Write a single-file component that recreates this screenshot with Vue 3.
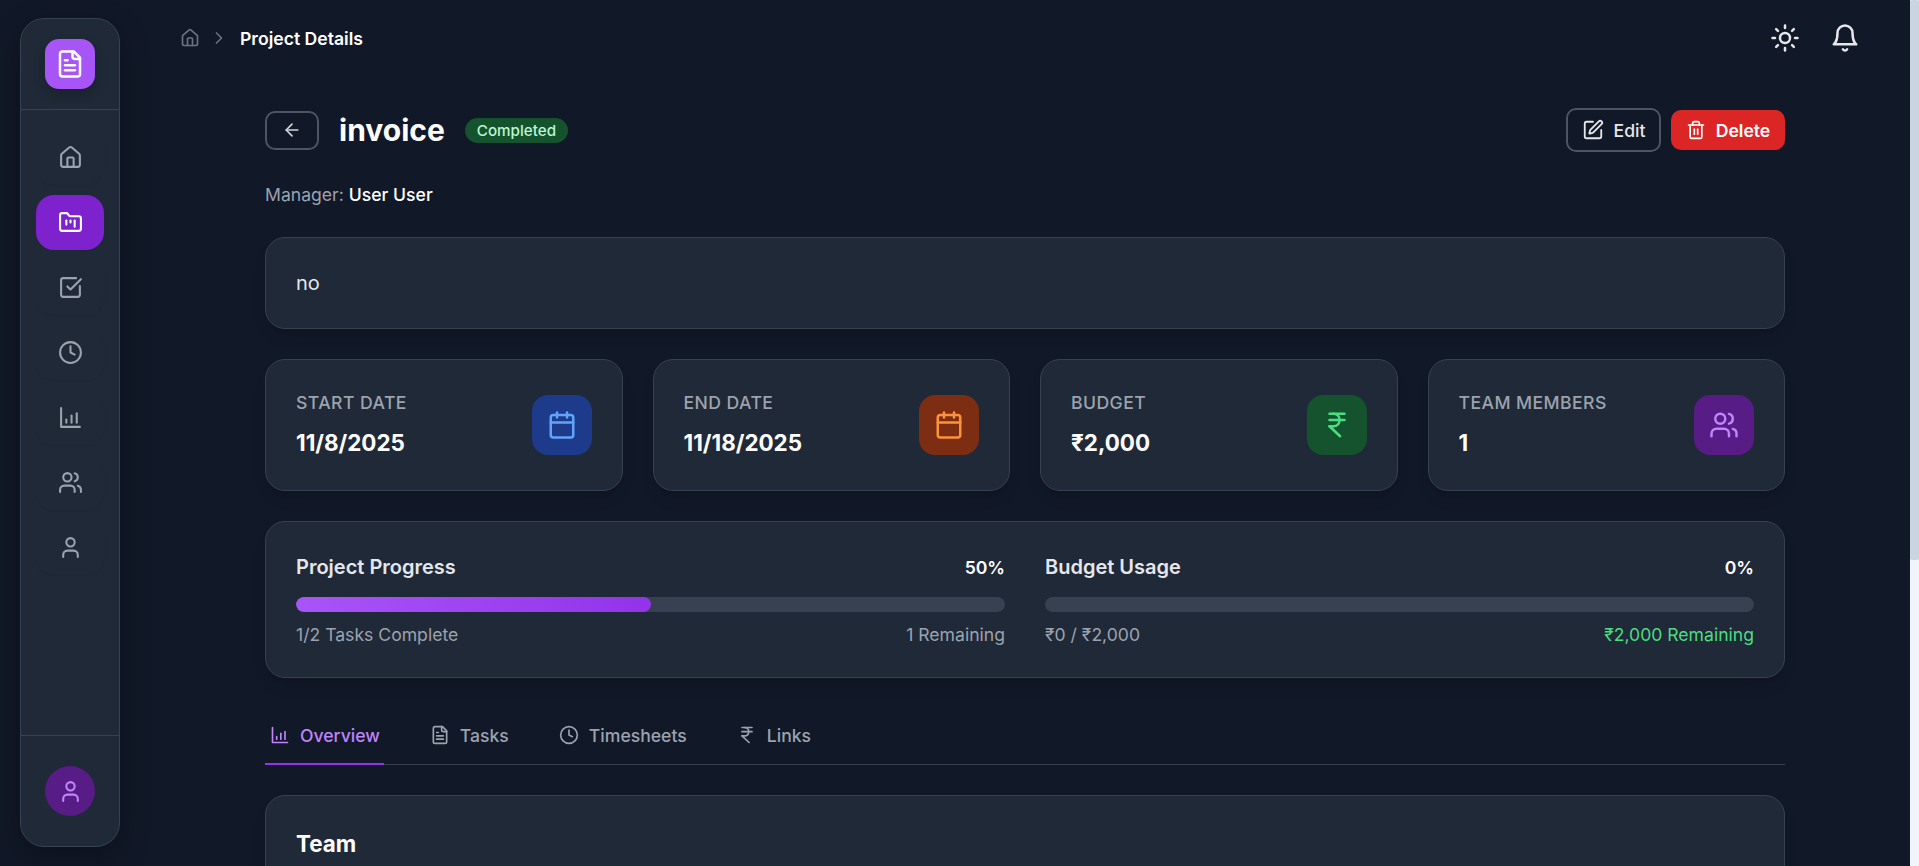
<script setup>
import { h } from 'vue'

const paths = {
  home: '<path d="M15 21v-8a1 1 0 0 0-1-1h-4a1 1 0 0 0-1 1v8"/><path d="M3 10a2 2 0 0 1 .709-1.528l7-5.999a2 2 0 0 1 2.582 0l7 5.999A2 2 0 0 1 21 10v9a2 2 0 0 1-2 2H5a2 2 0 0 1-2-2z"/>',
  folder: '<path d="M4 20h16a2 2 0 0 0 2-2V8a2 2 0 0 0-2-2h-7.93a2 2 0 0 1-1.66-.9l-.82-1.2A2 2 0 0 0 7.93 3H4a2 2 0 0 0-2 2v13c0 1.1.9 2 2 2Z"/><path d="M8 10v4"/><path d="M12 10v2"/><path d="M16 10v6"/>',
  check: '<path d="M21 10.656V19a2 2 0 0 1-2 2H5a2 2 0 0 1-2-2V5a2 2 0 0 1 2-2h12.344"/><path d="m9 11 3 3L22 4"/>',
  clock: '<circle cx="12" cy="12" r="10"/><path d="M12 6v6l4 2"/>',
  chart: '<path d="M3 3v18h18"/><path d="M8 17v-3"/><path d="M13 17v-7"/><path d="M18 17V8"/>',
  users: '<path d="M16 21v-2a4 4 0 0 0-4-4H6a4 4 0 0 0-4 4v2"/><circle cx="9" cy="7" r="4"/><path d="M22 21v-2a4 4 0 0 0-3-3.87"/><path d="M16 3.13a4 4 0 0 1 0 7.75"/>',
  user: '<path d="M19 21v-2a4 4 0 0 0-4-4H9a4 4 0 0 0-4 4v2"/><circle cx="12" cy="7" r="4"/>',
  file: '<path d="M15 2H6a2 2 0 0 0-2 2v16a2 2 0 0 0 2 2h12a2 2 0 0 0 2-2V7Z"/><path d="M14 2v4a2 2 0 0 0 2 2h4"/><path d="M10 9H8"/><path d="M16 13H8"/><path d="M16 17H8"/>',
  sun: '<circle cx="12" cy="12" r="4"/><path d="M12 2v2"/><path d="M12 20v2"/><path d="m4.93 4.93 1.41 1.41"/><path d="m17.66 17.66 1.41 1.41"/><path d="M2 12h2"/><path d="M20 12h2"/><path d="m6.34 17.66-1.41 1.41"/><path d="m19.07 4.93-1.41 1.41"/>',
  bell: '<path d="M6 8a6 6 0 0 1 12 0c0 7 3 9 3 9H3s3-2 3-9"/><path d="M10.3 21a1.94 1.94 0 0 0 3.4 0"/>',
  back: '<path d="m12 19-7-7 7-7"/><path d="M19 12H5"/>',
  chevron: '<path d="m9 18 6-6-6-6"/>',
  edit: '<path d="M12 3H5a2 2 0 0 0-2 2v14a2 2 0 0 0 2 2h14a2 2 0 0 0 2-2v-7"/><path d="M18.375 2.625a1 1 0 0 1 3 3l-9.013 9.014a2 2 0 0 1-.853.505l-2.873.84a.5.5 0 0 1-.62-.62l.84-2.873a2 2 0 0 1 .506-.852z"/>',
  trash: '<path d="M3 6h18"/><path d="M19 6v14c0 1-1 2-2 2H7c-1 0-2-1-2-2V6"/><path d="M8 6V4c0-1 1-2 2-2h4c1 0 2 1 2 2v2"/><path d="M10 11v6"/><path d="M14 11v6"/>',
  calendar: '<path d="M8 2v4"/><path d="M16 2v4"/><rect x="3" y="4" width="18" height="18" rx="2"/><path d="M3 10h18"/>',
  rupee: '<path d="M6 3h12"/><path d="M6 8h12"/><path d="m6 13 8.5 8"/><path d="M6 13h3"/><path d="M9 13c6.667 0 6.667-10 0-10"/>'
}

const Icon = (props) =>
  h('svg', {
    width: props.size,
    height: props.size,
    viewBox: '0 0 24 24',
    fill: 'none',
    stroke: 'currentColor',
    'stroke-width': 2,
    'stroke-linecap': 'round',
    'stroke-linejoin': 'round',
    innerHTML: paths[props.name]
  })
Icon.props = ['name', 'size']

const navItems = [
  { icon: 'home' },
  { icon: 'folder', active: true },
  { icon: 'check' },
  { icon: 'clock' },
  { icon: 'chart' },
  { icon: 'users' },
  { icon: 'user' }
]

const stats = [
  { label: 'Start Date', value: '11/8/2025', icon: 'calendar', tone: 'blue' },
  { label: 'End Date', value: '11/18/2025', icon: 'calendar', tone: 'orange' },
  { label: 'Budget', value: '₹2,000', icon: 'rupee', tone: 'green' },
  { label: 'Team Members', value: '1', icon: 'users', tone: 'purple' }
]

const progress = [
  { title: 'Project Progress', pct: 50, left: '1/2 Tasks Complete', right: '1 Remaining' },
  { title: 'Budget Usage', pct: 0, left: '₹0 / ₹2,000', right: '₹2,000 Remaining', good: true }
]

const tabs = [
  { label: 'Overview', icon: 'chart', active: true },
  { label: 'Tasks', icon: 'file' },
  { label: 'Timesheets', icon: 'clock' },
  { label: 'Links', icon: 'rupee' }
]
</script>

<template>
  <div class="page">
    <aside class="sidebar">
      <div class="brand">
        <div class="logo"><Icon name="file" :size="30" /></div>
      </div>
      <nav class="nav">
        <a v-for="(item, i) in navItems" :key="i" class="nav-item" :class="{ active: item.active }">
          <Icon :name="item.icon" :size="25" />
        </a>
      </nav>
      <div class="side-foot">
        <div class="avatar"><Icon name="user" :size="25" /></div>
      </div>
    </aside>

    <main class="main">
      <header class="topbar">
        <div class="crumbs">
          <span class="crumb-home"><Icon name="home" :size="20" /></span>
          <span class="crumb-sep"><Icon name="chevron" :size="20" /></span>
          <span class="crumb-current">Project Details</span>
        </div>
        <div class="top-actions">
          <span class="top-icon"><Icon name="sun" :size="30" /></span>
          <span class="top-icon"><Icon name="bell" :size="30" /></span>
        </div>
      </header>

      <div class="content">
        <div class="title-row">
          <div class="title-left">
            <button class="back"><Icon name="back" :size="20" /></button>
            <h1 class="title">invoice</h1>
            <span class="badge">Completed</span>
          </div>
          <div class="title-actions">
            <button class="btn btn-edit"><Icon name="edit" :size="22" />Edit</button>
            <button class="btn btn-delete"><Icon name="trash" :size="20" />Delete</button>
          </div>
        </div>

        <p class="manager"><span class="muted">Manager:</span> <span class="manager-name">User User</span></p>

        <section class="card desc">no</section>

        <section class="stats">
          <div v-for="s in stats" :key="s.label" class="card stat">
            <div>
              <div class="stat-label">{{ s.label }}</div>
              <div class="stat-value">{{ s.value }}</div>
            </div>
            <div class="tile" :class="s.tone"><Icon :name="s.icon" :size="30" /></div>
          </div>
        </section>

        <section class="card progress">
          <div v-for="p in progress" :key="p.title" class="prog">
            <div class="prog-head">
              <span class="prog-title">{{ p.title }}</span>
              <span class="prog-pct">{{ p.pct }}%</span>
            </div>
            <div class="bar"><div class="bar-fill" :style="{ width: p.pct + '%' }"></div></div>
            <div class="prog-foot">
              <span>{{ p.left }}</span>
              <span :class="{ good: p.good }">{{ p.right }}</span>
            </div>
          </div>
        </section>

        <div class="tabs">
          <a v-for="t in tabs" :key="t.label" class="tab" :class="{ active: t.active }">
            <Icon :name="t.icon" :size="20" />{{ t.label }}
          </a>
        </div>

        <section class="card team">
          <h2 class="team-title">Team</h2>
        </section>
      </div>
    </main>

    <div class="scrollbar" aria-hidden="true"><div class="scroll-thumb"></div></div>
  </div>
</template>

<style scoped>
.page {
  min-height: 100vh;
  box-sizing: border-box;
  padding-right: 9px;
  background: #111827;
  font-family: Inter, "Liberation Sans", sans-serif;
  color: #fff;
}
.scrollbar {
  position: fixed;
  top: 0;
  right: 0;
  bottom: 0;
  width: 9px;
  background: #f1f5f9;
}
.scroll-thumb {
  height: 560px;
  background: #cbd5e1;
  border-radius: 2px;
}
.sidebar {
  position: fixed;
  left: 20px;
  top: 18px;
  bottom: 19px;
  width: 100px;
  box-sizing: border-box;
  display: flex;
  flex-direction: column;
  background: #1f2937;
  border: 1px solid #374151;
  border-radius: 24px;
  box-shadow: 0 10px 30px rgba(0, 0, 0, 0.3);
}
.brand {
  height: 91px;
  flex: none;
  box-sizing: border-box;
  display: flex;
  justify-content: center;
  padding-top: 20px;
  border-bottom: 1px solid #374151;
}
.logo {
  width: 50px;
  height: 50px;
  border-radius: 14px;
  background: #a855f7;
  display: flex;
  align-items: center;
  justify-content: center;
  color: #fff;
  box-shadow: 0 6px 12px rgba(0, 0, 0, 0.2);
}
.nav {
  flex: 1;
  display: flex;
  flex-direction: column;
  align-items: center;
  gap: 10px;
  padding-top: 20px;
}
.nav-item {
  width: 68px;
  height: 55px;
  border-radius: 18px;
  display: flex;
  align-items: center;
  justify-content: center;
  color: #9ca3af;
  box-shadow: 0 1px 2px rgba(0, 0, 0, 0.05);
}
.nav-item.active {
  background: #7e22ce;
  color: #fff;
}
.side-foot {
  height: 111px;
  flex: none;
  box-sizing: border-box;
  border-top: 1px solid #374151;
  display: flex;
  justify-content: center;
  padding-top: 30px;
}
.avatar {
  width: 50px;
  height: 50px;
  border-radius: 50%;
  background: #581c87;
  color: #c084fc;
  display: flex;
  align-items: center;
  justify-content: center;
}
.main {
  margin-left: 140px;
}
.topbar {
  height: 76px;
  box-sizing: border-box;
  padding: 0 50px 0 40px;
  display: flex;
  align-items: center;
  justify-content: space-between;
}
.crumbs {
  display: flex;
  align-items: center;
}
.crumb-home {
  display: flex;
  color: #6b7280;
}
.crumb-sep {
  display: flex;
  color: #6b7280;
  margin: 0 11px 0 9px;
}
.crumb-current {
  font-size: 17.6px;
  font-weight: 600;
  color: #fff;
}
.top-actions {
  display: flex;
  gap: 30px;
}
.top-icon {
  display: flex;
  color: #e5e7eb;
}
.content {
  max-width: 1520px;
  margin: 0 auto;
  padding: 32px 0 44px;
}
.title-row {
  display: flex;
  align-items: center;
  justify-content: space-between;
  height: 44px;
}
.title-left {
  display: flex;
  align-items: center;
}
.back {
  width: 54px;
  height: 39px;
  box-sizing: border-box;
  background: transparent;
  border: 2px solid #4b5563;
  border-radius: 10px;
  color: #d1d5db;
  display: flex;
  align-items: center;
  justify-content: center;
  padding: 0;
}
.title {
  margin: 0 0 0 20px;
  font-size: 30px;
  line-height: 36px;
  font-weight: 700;
  color: #fff;
}
.badge {
  margin-left: 20px;
  height: 25px;
  padding: 0 12px;
  border-radius: 13px;
  background: #14532d;
  color: #bbf7d0;
  font-size: 15.2px;
  font-weight: 500;
  line-height: 25px;
}
.title-actions {
  display: flex;
  align-items: center;
  gap: 10px;
}
.btn {
  box-sizing: border-box;
  display: flex;
  align-items: center;
  gap: 10px;
  font-family: inherit;
  font-size: 17.6px;
  font-weight: 500;
  border-radius: 10px;
  padding: 0;
}
.btn-edit {
  width: 95px;
  height: 44px;
  justify-content: center;
  background: transparent;
  border: 2px solid #4b5563;
  color: #e5e7eb;
}
.btn-delete {
  width: 114px;
  height: 40px;
  justify-content: center;
  background: #dc2626;
  border: none;
  color: #fff;
  font-weight: 600;
}
.manager {
  margin: 31px 0 0;
  font-size: 17.6px;
  line-height: 24px;
}
.muted {
  color: #9ca3af;
}
.manager-name {
  color: #fff;
  font-weight: 500;
}
.card {
  box-sizing: border-box;
  background: #1f2937;
  border: 1px solid #374151;
  border-radius: 20px;
  box-shadow: 0 10px 15px -3px rgba(0, 0, 0, 0.1), 0 4px 6px -4px rgba(0, 0, 0, 0.1);
}
.desc {
  margin-top: 30px;
  height: 92px;
  padding: 0 30px;
  display: flex;
  align-items: center;
  font-size: 20px;
  color: #e5e7eb;
}
.stats {
  margin-top: 30px;
  display: grid;
  grid-template-columns: repeat(4, 1fr);
  gap: 30px;
}
.stat {
  height: 132px;
  padding: 0 30px;
  display: flex;
  align-items: center;
  justify-content: space-between;
}
.stat-label {
  font-size: 17.6px;
  line-height: 24px;
  font-weight: 500;
  color: #9ca3af;
  text-transform: uppercase;
  letter-spacing: 0.025em;
}
.stat-value {
  margin-top: 12px;
  font-size: 22.4px;
  line-height: 32px;
  font-weight: 700;
  color: #fff;
}
.tile {
  width: 60px;
  height: 60px;
  border-radius: 16px;
  display: flex;
  align-items: center;
  justify-content: center;
}
.tile.blue {
  background: #1e3a8a;
  color: #60a5fa;
}
.tile.orange {
  background: #7c2d12;
  color: #fb923c;
}
.tile.green {
  background: #14532d;
  color: #4ade80;
}
.tile.purple {
  background: #581c87;
  color: #c084fc;
}
.progress {
  margin-top: 30px;
  height: 157px;
  padding: 1px 30px 0;
  display: grid;
  grid-template-columns: 1fr 1fr;
  gap: 40px;
  align-items: center;
}
.prog-head {
  display: flex;
  justify-content: space-between;
  align-items: center;
  height: 28px;
}
.prog-title {
  font-size: 20px;
  font-weight: 600;
  color: #e5e7eb;
}
.prog-pct {
  font-size: 17.6px;
  font-weight: 600;
  color: #fff;
}
.bar {
  margin-top: 16px;
  height: 15px;
  border-radius: 8px;
  background: #374151;
  overflow: hidden;
}
.bar-fill {
  height: 100%;
  border-radius: 8px;
  background: linear-gradient(90deg, #a855f7, #9333ea);
}
.prog-foot {
  margin-top: 11px;
  display: flex;
  justify-content: space-between;
  font-size: 17.6px;
  line-height: 24px;
  color: #9ca3af;
}
.good {
  color: #4ade80;
}
.tabs {
  margin-top: 29px;
  height: 58px;
  box-sizing: border-box;
  display: flex;
  gap: 41px;
  border-bottom: 1px solid #374151;
}
.tab {
  display: flex;
  align-items: center;
  gap: 10px;
  padding: 0 4px 0 5px;
  height: 58px;
  box-sizing: border-box;
  font-size: 17.6px;
  font-weight: 500;
  color: #9ca3af;
  border-bottom: 2px solid transparent;
}
.tab.active {
  color: #c084fc;
  border-bottom-color: #9333ea;
}
.team {
  margin-top: 30px;
  min-height: 470px;
  padding: 30px;
}
.team-title {
  margin: 0;
  font-size: 22.4px;
  line-height: 36px;
  font-weight: 700;
  color: #fff;
}
</style>
